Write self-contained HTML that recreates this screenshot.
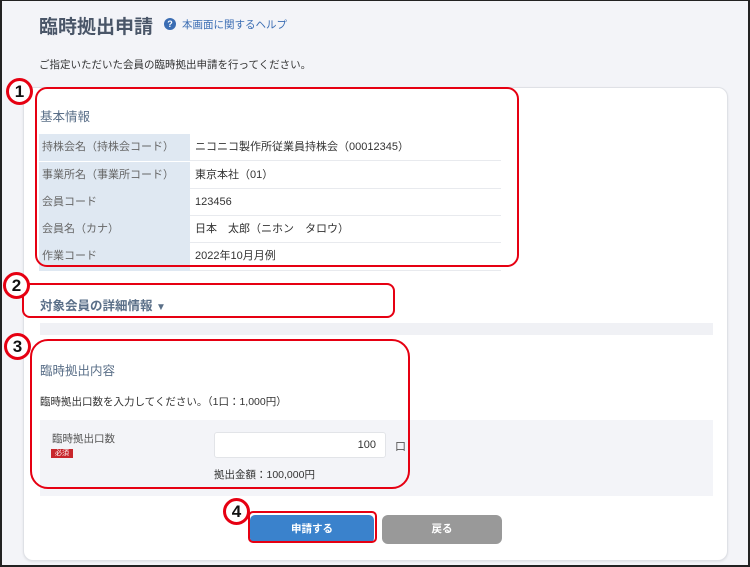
<!DOCTYPE html>
<html><head><meta charset="utf-8"><style>
*{margin:0;padding:0;box-sizing:border-box}
body{width:750px;height:567px;overflow:hidden;background:#fff;font-family:"Liberation Sans","Noto Sans CJK JP",sans-serif;position:relative}
.frame{position:absolute;left:0;top:0;width:750px;height:567px;border:2px solid #222;border-top-width:1px;background:#f3f4f8}
.a{position:absolute}
.card{left:23px;top:87px;width:705px;height:474px;background:#fff;border:1px solid #dfe1e6;border-radius:10px;box-shadow:0 1px 2px rgba(0,0,0,.08)}
.red{position:absolute;border:2px solid #e60012;border-radius:12px}
.num{position:absolute;width:27px;height:27px;border:3px solid #e60012;border-radius:50%;background:#fff;font:bold 17px "Liberation Sans",sans-serif;color:#111;text-align:center;line-height:21px}
.row{position:absolute;left:39px;width:462px;height:27px;border-bottom:1px solid #e8eaee;font-size:11px;line-height:27px}
.row .l{position:absolute;left:0;top:0;width:151px;height:27px;background:#dfe8f2;color:#666;padding-left:3px}
.row .v{position:absolute;left:156px;top:0;color:#333}
.h{color:#5a6f88;font-size:12.5px}
</style></head><body>
<div class="frame"></div>
<div class="a" style="left:39px;top:12px;font-size:19px;font-weight:bold;color:#4a5668">臨時拠出申請</div>
<div class="a" style="left:164px;top:18px;width:12px;height:12px;border-radius:50%;background:#3b6db3;color:#fff;font-size:9px;font-weight:bold;text-align:center;line-height:12px">?</div>
<div class="a" style="left:182px;top:17px;font-size:10.5px;color:#3b6db3">本画面に関するヘルプ</div>
<div class="a" style="left:39px;top:57px;font-size:10.5px;color:#333">ご指定いただいた会員の臨時拠出申請を行ってください。</div>
<div class="a card"></div>
<div class="a h" style="left:40px;top:106px">基本情報</div>
<div class="row" style="top:134px"><div class="l">持株会名（持株会コード）</div><div class="v">ニコニコ製作所従業員持株会（00012345）</div></div>
<div class="row" style="top:162px"><div class="l">事業所名（事業所コード）</div><div class="v">東京本社（01）</div></div>
<div class="row" style="top:189px"><div class="l">会員コード</div><div class="v">123456</div></div>
<div class="row" style="top:216px"><div class="l">会員名（カナ）</div><div class="v">日本　太郎（ニホン　タロウ）</div></div>
<div class="row" style="top:243px;height:28px"><div class="l" style="height:28px">作業コード</div><div class="v">2022年10月月例</div></div>
<div class="red" style="left:35px;top:87px;width:484px;height:180px"></div>
<div class="num" style="left:6px;top:78px">1</div>
<div class="a h" style="left:40px;top:295px;font-weight:bold">対象会員の詳細情報 <span style="font-size:10px">▼</span></div>
<div class="red" style="left:22px;top:283px;width:373px;height:35px;border-radius:8px"></div>
<div class="num" style="left:3px;top:272px">2</div>
<div class="a" style="left:40px;top:323px;width:673px;height:12px;background:#f0f1f5"></div>
<div class="a h" style="left:40px;top:360px">臨時拠出内容</div>
<div class="a" style="left:40px;top:394px;font-size:10.5px;color:#333">臨時拠出口数を入力してください。（1口：1,000円）</div>
<div class="a" style="left:40px;top:420px;width:673px;height:76px;background:#f3f4f8"></div>
<div class="a" style="left:52px;top:431px;font-size:10.5px;color:#555">臨時拠出口数</div>
<div class="a" style="left:51px;top:449px;width:22px;height:9px;background:#c8262c;color:#fff;font-size:7px;line-height:9px;text-align:center">必須</div>
<div class="a" style="left:214px;top:432px;width:172px;height:26px;background:#fff;border:1px solid #e2e4e8;border-radius:3px;font-size:11px;text-align:right;padding-right:9px;line-height:24px;color:#333">100</div>
<div class="a" style="left:395px;top:438px;font-size:11px;color:#555">口</div>
<div class="a" style="left:214px;top:467px;font-size:10.5px;color:#333">拠出金額：100,000円</div>
<div class="red" style="left:30px;top:339px;width:380px;height:150px;border-radius:18px"></div>
<div class="num" style="left:4px;top:333px">3</div>
<div class="a" style="left:250px;top:515px;width:124px;height:28px;background:#3a82cc;border-radius:5px;color:#fff;font-size:10.5px;font-weight:bold;text-align:center;line-height:28px">申請する</div>
<div class="red" style="left:248px;top:511px;width:129px;height:32px;border-radius:5px"></div>
<div class="num" style="left:223px;top:498px">4</div>
<div class="a" style="left:382px;top:515px;width:120px;height:29px;background:#999;border-radius:6px;color:#fff;font-size:10.5px;font-weight:bold;text-align:center;line-height:29px">戻る</div>
</body></html>
